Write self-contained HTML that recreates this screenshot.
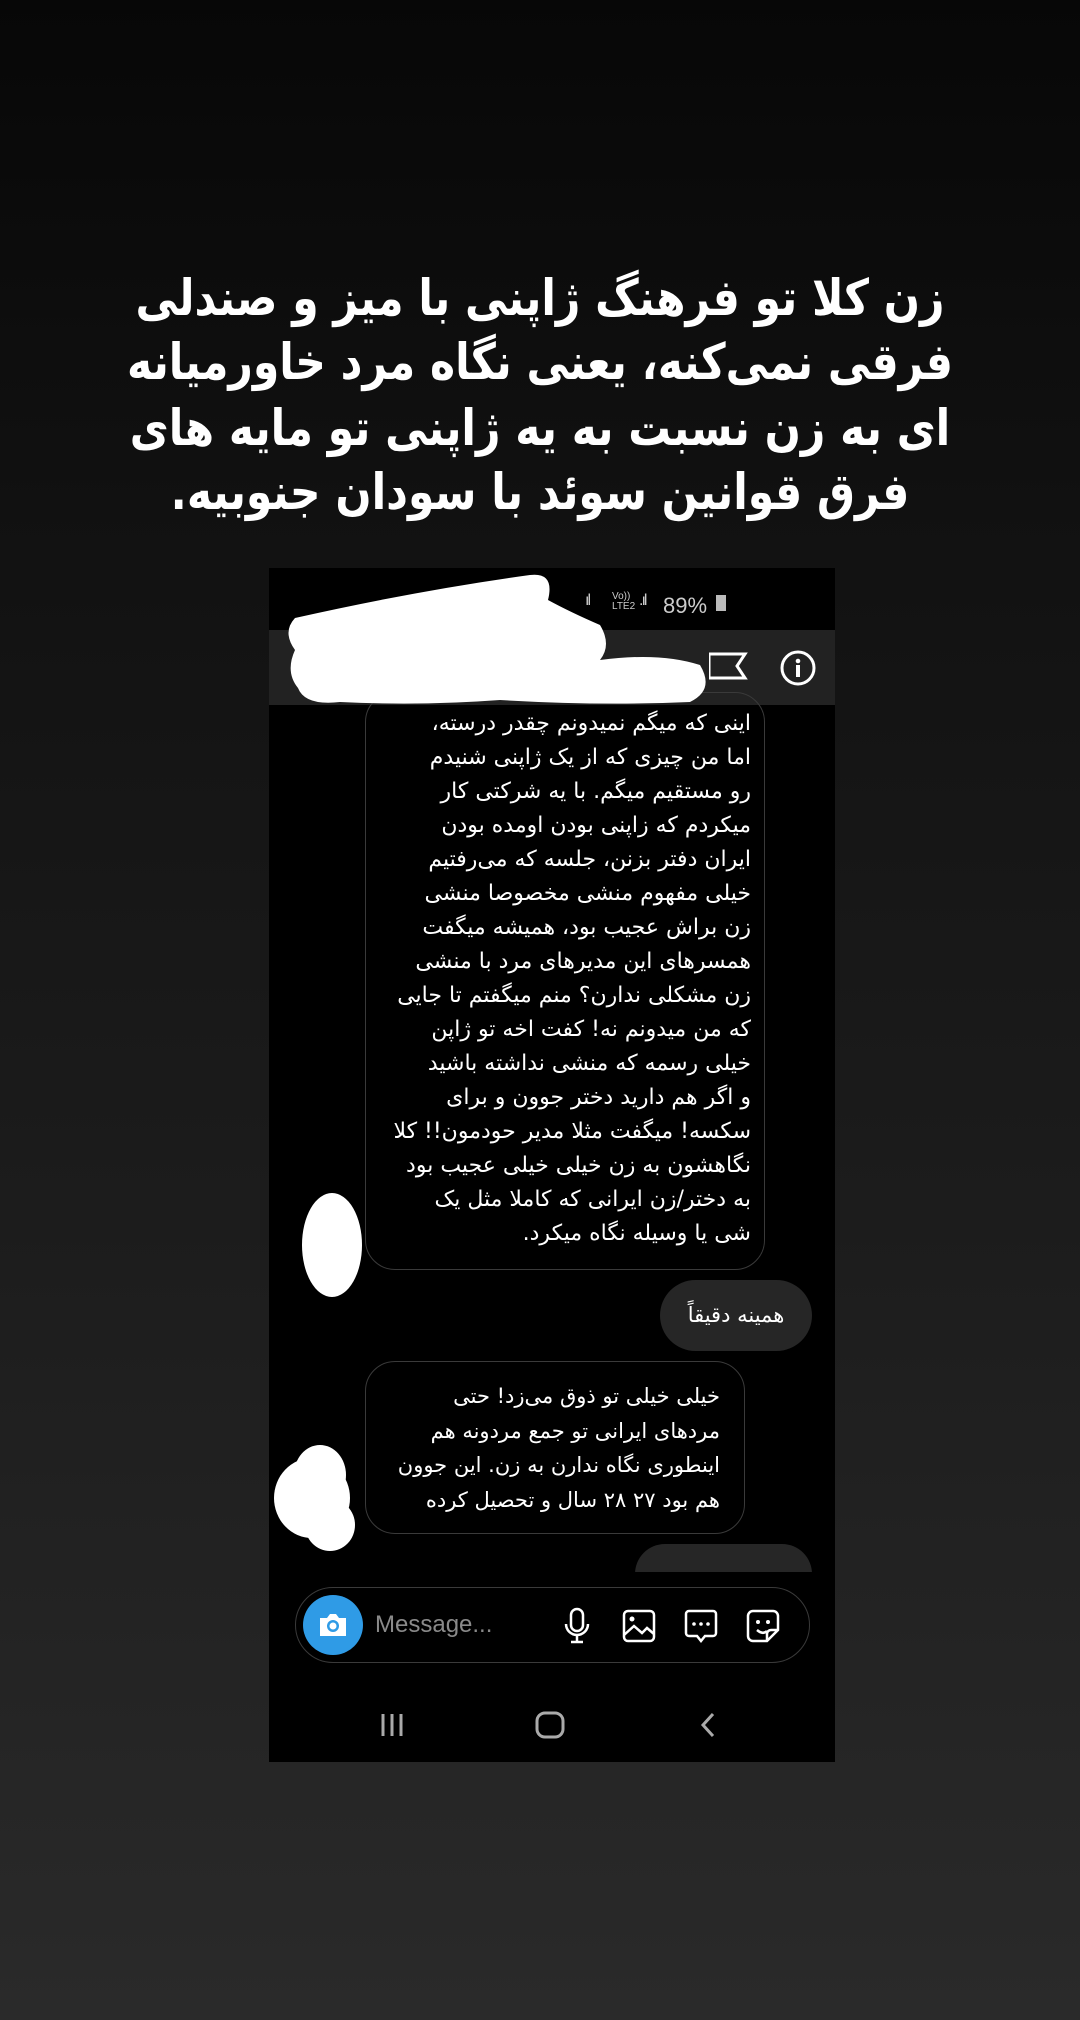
<!DOCTYPE html>
<html><head><meta charset="utf-8">
<style>
html,body{margin:0;padding:0}
body{width:1080px;height:2020px;overflow:hidden;position:relative;background:linear-gradient(#070707 0%,#111 25%,#1c1c1c 60%,#2a2a2a 100%);font-family:"Liberation Sans","DejaVu Sans",sans-serif}
.tl{position:absolute;left:0;width:1080px;text-align:center;direction:rtl;color:#fff;font-weight:bold;font-size:50px;line-height:64px;font-family:"DejaVu Sans",sans-serif;white-space:nowrap;transform:scaleX(0.85);transform-origin:540px 0}
.phone{position:absolute;left:269px;top:568px;width:566px;height:1194px;background:#000;overflow:hidden}
.status{position:absolute;left:0;top:0;width:566px;height:62px;background:#000}
.header{position:absolute;left:0;top:62px;width:566px;height:75px;background:#222}
.bub{position:absolute;border:1.5px solid #3a3a3a;border-radius:30px;color:#fff;direction:rtl;text-align:right;font-family:"DejaVu Sans",sans-serif;font-size:22px;line-height:34px;box-sizing:border-box;white-space:nowrap}
.fill{position:absolute;background:#262626;border-radius:40px;color:#fff;direction:rtl;font-family:"DejaVu Sans",sans-serif;font-size:21px}
</style></head><body>
<div class="tl" style="top:266px">زن کلا تو فرهنگ ژاپنی با میز و صندلی</div>
<div class="tl" style="top:330px">فرقی نمی‌کنه، یعنی نگاه مرد خاورمیانه</div>
<div class="tl" style="top:396px">ای به زن نسبت به یه ژاپنی تو مایه های</div>
<div class="tl" style="top:460px">فرق قوانین سوئد با سودان جنوبیه.</div>

<div class="phone">
 <div class="status">
  <span style="position:absolute;left:394px;top:25px;color:#ccc;font-size:22px">89%</span>
  <div style="position:absolute;left:447px;top:27px;width:10px;height:16px;background:#bbb"></div>
  <span style="position:absolute;left:343px;top:24px;color:#ccc;font-size:10px;line-height:10px">Vo))<br>LTE2</span>
  <span style="position:absolute;left:316px;top:24px;color:#ccc;font-size:16px;letter-spacing:-2px">ıl</span>
  <span style="position:absolute;left:370px;top:24px;color:#ccc;font-size:16px;letter-spacing:-2px">.ıl</span>
 </div>
 <div class="header">
  <svg style="position:absolute;left:440px;top:18px" width="40" height="40" viewBox="0 0 40 40"><path d="M0 6 H36 L28 18 L36 30 H0 Z" fill="none" stroke="#fff" stroke-width="3"/></svg>
  <svg style="position:absolute;left:510px;top:19px" width="38" height="38" viewBox="0 0 38 38"><circle cx="19" cy="19" r="16" fill="none" stroke="#fff" stroke-width="3"/><circle cx="19" cy="12" r="2.3" fill="#fff"/><rect x="17" y="16" width="4" height="12" fill="#fff"/></svg>
 </div>

 <div class="bub" style="left:96px;top:124px;width:400px;height:578px;padding:14px 13px 0 10px">اینی که میگم نمیدونم چقدر درسته،<br>اما من چیزی که از یک ژاپنی شنیدم<br>رو مستقیم میگم. با یه شرکتی کار<br>میکردم که زاپنی بودن اومده بودن<br>ایران دفتر بزنن، جلسه که می‌رفتیم<br>خیلی مفهوم منشی مخصوصا منشی<br>زن براش عجیب بود، همیشه میگفت<br>همسرهای این مدیرهای مرد با منشی<br>زن مشکلی ندارن؟ منم میگفتم تا جایی<br>که من میدونم نه! کفت اخه تو ژاپن<br>خیلی رسمه که منشی نداشته باشید<br>و اگر هم دارید دختر جوون و برای<br>سکسه! میگفت مثلا مدیر حودمون!! کلا<br>نگاهشون به زن خیلی خیلی عجیب بود<br>به دختر/زن ایرانی که کاملا مثل یک<br>شی یا وسیله نگاه میکرد.</div>

 <div class="fill" style="left:391px;top:712px;width:152px;height:71px;line-height:71px;text-align:center">همینه دقیقاً</div>

 <div class="bub" style="left:96px;top:793px;width:380px;height:173px;padding:17px 24px 0 10px;font-size:21px;line-height:34.5px">خیلی خیلی تو ذوق می‌زد! حتی<br>مردهای ایرانی تو جمع مردونه هم<br>اینطوری نگاه ندارن به زن. این جوون<br>هم بود ۲۷ ۲۸ سال و تحصیل کرده</div>

 <div class="fill" style="left:366px;top:976px;width:177px;height:60px"></div>
 <div style="position:absolute;left:0;top:1004px;width:566px;height:190px;background:#000"></div>

 <div style="position:absolute;left:26px;top:1019px;width:515px;height:76px;border:1.5px solid #3a3a3a;border-radius:40px;box-sizing:border-box"></div>
 <div style="position:absolute;left:34px;top:1027px;width:60px;height:60px;border-radius:50%;background:#2f9be6"></div>
 <svg style="position:absolute;left:48px;top:1042px" width="32" height="30" viewBox="0 0 32 30"><path d="M3 8 H10 L13 4 H19 L22 8 H29 V26 H3 Z" fill="#fff"/><circle cx="16" cy="16" r="6" fill="#2f9be6"/><circle cx="16" cy="16" r="3.5" fill="#fff"/></svg>
 <span style="position:absolute;left:106px;top:1043px;color:#8a8a8a;font-size:24px">Message...</span>
 <svg style="position:absolute;left:290px;top:1038px" width="36" height="40" viewBox="0 0 36 40"><rect x="12" y="3" width="12" height="22" rx="6" fill="none" stroke="#fff" stroke-width="2.5"/><path d="M7 18 a11 11 0 0 0 22 0 M18 29 V36 M12 36 H24" fill="none" stroke="#fff" stroke-width="2.5"/></svg>
 <svg style="position:absolute;left:352px;top:1040px" width="36" height="36" viewBox="0 0 36 36"><rect x="3" y="3" width="30" height="30" rx="4" fill="none" stroke="#fff" stroke-width="2.5"/><circle cx="11" cy="11" r="2.5" fill="#fff"/><path d="M3 27 L13 18 L21 25 L26 20 L33 26" fill="none" stroke="#fff" stroke-width="2.5"/></svg>
 <svg style="position:absolute;left:414px;top:1040px" width="36" height="38" viewBox="0 0 36 38"><path d="M6 3 H30 a3 3 0 0 1 3 3 V25 a3 3 0 0 1 -3 3 H22 L18 33 L14 28 H6 a3 3 0 0 1 -3 -3 V6 a3 3 0 0 1 3 -3Z" fill="none" stroke="#fff" stroke-width="2.5"/><circle cx="11" cy="16" r="1.8" fill="#fff"/><circle cx="18" cy="16" r="1.8" fill="#fff"/><circle cx="25" cy="16" r="1.8" fill="#fff"/></svg>
 <svg style="position:absolute;left:476px;top:1040px" width="38" height="38" viewBox="0 0 38 38"><path d="M33 22 V8 a5 5 0 0 0 -5 -5 H8 a5 5 0 0 0 -5 5 V28 a5 5 0 0 0 5 5 H22 Z M22 33 V26 a4 4 0 0 1 4 -4 H33" fill="none" stroke="#fff" stroke-width="2.5"/><circle cx="13" cy="14" r="2" fill="#fff"/><circle cx="23" cy="14" r="2" fill="#fff"/><path d="M12 22 q6 5 10 1" fill="none" stroke="#fff" stroke-width="2.5"/></svg>

 <svg style="position:absolute;left:108px;top:1142px" width="30" height="30" viewBox="0 0 30 30"><path d="M6 4 V26 M15 4 V26 M24 4 V26" stroke="#aaa" stroke-width="3"/></svg>
 <svg style="position:absolute;left:264px;top:1141px" width="34" height="32" viewBox="0 0 34 32"><rect x="4" y="4" width="26" height="24" rx="8" fill="none" stroke="#aaa" stroke-width="3"/></svg>
 <svg style="position:absolute;left:427px;top:1142px" width="24" height="30" viewBox="0 0 24 30"><path d="M17 4 L7 15 L17 26" fill="none" stroke="#aaa" stroke-width="3"/></svg>
</div>

<svg style="position:absolute;left:0;top:0" width="1080" height="2020">
 <path d="M295 618 Q420 590 530 575 Q555 572 548 600 Q570 612 600 625 Q612 645 600 660 Q660 652 700 665 Q715 690 690 702 Q600 706 500 700 Q420 706 340 702 Q305 706 298 688 Q285 672 295 650 Q282 632 295 618Z" fill="#fff"/>
 <ellipse cx="332" cy="1245" rx="30" ry="52" fill="#fff"/>
 <ellipse cx="320" cy="1475" rx="26" ry="30" fill="#fff"/>
 <ellipse cx="312" cy="1498" rx="38" ry="40" fill="#fff"/>
 <ellipse cx="330" cy="1525" rx="25" ry="26" fill="#fff"/>
</svg>
</body></html>
